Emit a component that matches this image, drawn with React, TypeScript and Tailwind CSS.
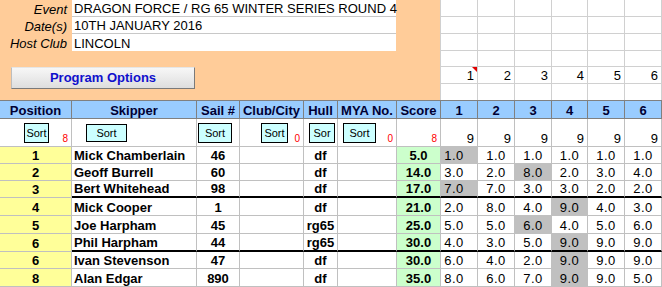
import React from "react";

const FONT = { fontFamily: '"Liberation Sans", Arial, sans-serif' };

const W = [
  "w-[72px]",
  "w-[125px]",
  "w-[43px]",
  "w-[64px]",
  "w-[34px]",
  "w-[59px]",
  "w-[44px]",
  "w-[37px]",
  "w-[37px]",
  "w-[37px]",
  "w-[36px]",
  "w-[37px]",
  "w-[37px]",
];
const RW = ["w-[37px]", "w-[37px]", "w-[37px]", "w-[36px]", "w-[37px]", "w-[37px]"];
const TOPH = ["h-[17px]", "h-[17px]", "h-[17px]", "h-[16px]", "h-[17px]", "h-[16px]"];

type Row = {
  pos: string;
  name: string;
  sail: string;
  hull: string;
  score: string;
  r: string[];
  g: number;
  h: string;
  thick: boolean;
};

const rows: Row[] = [
  { pos: "1", name: "Mick Chamberlain", sail: "46", hull: "df", score: "5.0", r: ["1.0", "1.0", "1.0", "1.0", "1.0", "1.0"], g: 0, h: "h-[17px]", thick: false },
  { pos: "2", name: "Geoff Burrell", sail: "60", hull: "df", score: "14.0", r: ["3.0", "2.0", "8.0", "2.0", "3.0", "4.0"], g: 2, h: "h-[17px]", thick: false },
  { pos: "3", name: "Bert Whitehead", sail: "98", hull: "df", score: "17.0", r: ["7.0", "7.0", "3.0", "3.0", "2.0", "2.0"], g: 0, h: "h-[17px]", thick: true },
  { pos: "4", name: "Mick Cooper", sail: "1", hull: "df", score: "21.0", r: ["2.0", "8.0", "4.0", "9.0", "4.0", "3.0"], g: 3, h: "h-[18px]", thick: false },
  { pos: "5", name: "Joe Harpham", sail: "45", hull: "rg65", score: "25.0", r: ["5.0", "5.0", "6.0", "4.0", "5.0", "6.0"], g: 2, h: "h-[18px]", thick: false },
  { pos: "6", name: "Phil Harpham", sail: "44", hull: "rg65", score: "30.0", r: ["4.0", "3.0", "5.0", "9.0", "9.0", "9.0"], g: 3, h: "h-[18px]", thick: true },
  { pos: "6", name: "Ivan Stevenson", sail: "47", hull: "df", score: "30.0", r: ["6.0", "4.0", "2.0", "9.0", "9.0", "9.0"], g: 3, h: "h-[17px]", thick: false },
  { pos: "8", name: "Alan Edgar", sail: "890", hull: "df", score: "35.0", r: ["8.0", "6.0", "7.0", "9.0", "9.0", "5.0"], g: 3, h: "h-[18px]", thick: false },
];

const headers = ["Position", "Skipper", "Sail #", "Club/City", "Hull", "MYA No.", "Score", "1", "2", "3", "4", "5", "6"];

function SortBtn({ label, cls }: { label: string; cls: string }) {
  return (
    <div
      className={`box-border border border-black bg-[#ccffff] flex items-center justify-center text-[11px] leading-none text-black overflow-hidden ${cls}`}
    >
      {label}
    </div>
  );
}

export default function App() {
  return (
    <div style={FONT} className="w-[662px] h-[287px] overflow-hidden bg-white text-black select-none">
      {/* Top area */}
      <div className="flex h-[100px]">
        <div className="box-border w-[441px] bg-[#ffcc99] border-r border-[#d0d0d0] flex flex-col">
          {[
            ["Event", "DRAGON FORCE / RG 65 WINTER SERIES ROUND 4"],
            ["Date(s)", "10TH JANUARY 2016"],
            ["Host Club", "LINCOLN"],
          ].map(([l, v], i) => (
            <div key={l} className="flex h-[17px]">
              <div className="w-[72px] flex items-end justify-end pr-[5px] italic text-[13px] leading-[15px]">
                {l}
              </div>
              <div
                className={`box-border w-[324px] bg-white flex items-end pl-[2px] text-[13px] leading-[15px] whitespace-nowrap ${
                  i < 2 ? "border-b border-[#c8c8c8]" : ""
                }`}
              >
                {v}
              </div>
            </div>
          ))}
          <div className="flex-1 pl-[11px] pt-[16px]">
            <div className="box-border w-[184px] h-[22px] flex items-center justify-center bg-gradient-to-b from-[#f7f7f7] to-[#dedede] border border-t-[#e6e6e6] border-l-[#bdbdbd] border-r-[#7a7a7a] border-b-[#7a7a7a] text-[13px] font-bold text-[#1010cc]">
              Program Options
            </div>
          </div>
        </div>
        <div className="flex flex-col">
          {TOPH.map((h, ri) => (
            <div key={ri} className={`flex ${h}`}>
              {RW.map((w, ci) => (
                <div
                  key={ci}
                  className={`box-border relative ${w} border-r border-[#d0d0d0] ${
                    ri < 5 ? "border-b" : ""
                  } flex items-end justify-end pr-[3px] text-[13px] leading-[15px]`}
                >
                  {ri === 4 ? String(ci + 1) : ""}
                  {ri === 4 && ci === 0 ? (
                    <span className="absolute top-0 right-0 w-0 h-0 border-t-[5px] border-l-[5px] border-t-[#e00000] border-l-transparent" />
                  ) : null}
                </div>
              ))}
            </div>
          ))}
        </div>
      </div>

      {/* Header row */}
      <div className="flex border-t border-[#808080] h-[19px]">
        {headers.map((t, i) => (
          <div
            key={i}
            className={`box-border ${W[i]} bg-[#99ccff] border-r border-b border-[#808080] flex items-end justify-center text-[13px] leading-[15px] font-bold text-[#000033] whitespace-nowrap`}
          >
            {t}
          </div>
        ))}
      </div>

      {/* Sort row */}
      <div className="flex h-[28px]">
        <div className={`box-border ${W[0]} relative border-r border-b border-[#c0c0c0] pt-[4px] pl-[24px]`}>
          <SortBtn label="Sort" cls="w-[25px] h-[20px]" />
          <span className="absolute right-[3px] bottom-[2px] text-[10px] leading-none text-[#ff0000]">8</span>
        </div>
        <div className={`box-border ${W[1]} border-r border-b border-[#c0c0c0] pt-[5px] pl-[14px]`}>
          <SortBtn label="Sort" cls="w-[41px] h-[18px]" />
        </div>
        <div className={`box-border ${W[2]} border-r border-b border-[#c0c0c0] pt-[4px] pl-[1px]`}>
          <SortBtn label="Sort" cls="w-[34px] h-[20px]" />
        </div>
        <div className={`box-border ${W[3]} relative border-r border-b border-[#c0c0c0] pt-[4px] pl-[21px]`}>
          <SortBtn label="Sort" cls="w-[27px] h-[20px]" />
          <span className="absolute right-[3px] bottom-[2px] text-[10px] leading-none text-[#ff0000]">0</span>
        </div>
        <div className={`box-border ${W[4]} border-r border-b border-[#c0c0c0] pt-[4px] pl-[5px]`}>
          <SortBtn label="Sor" cls="w-[26px] h-[20px]" />
        </div>
        <div className={`box-border ${W[5]} relative border-r border-b border-[#c0c0c0] pt-[4px] pl-[5px]`}>
          <SortBtn label="Sort" cls="w-[33px] h-[20px]" />
          <span className="absolute right-[3px] bottom-[2px] text-[10px] leading-none text-[#ff0000]">0</span>
        </div>
        <div className={`box-border ${W[6]} relative border-r border-b border-[#c0c0c0]`}>
          <span className="absolute right-[3px] bottom-[2px] text-[10px] leading-none text-[#ff0000]">8</span>
        </div>
        {RW.map((w, i) => (
          <div
            key={i}
            className={`box-border ${w} border-r border-b border-[#c0c0c0] flex items-end justify-end pr-[3px] text-[13px] leading-[15px]`}
          >
            9
          </div>
        ))}
      </div>

      {/* Data rows */}
      {rows.map((r, ri) => {
        const b = r.thick ? "border-b-2 border-b-black" : "border-b";
        const base = "box-border border-r border-[#c0c0c0] flex items-end text-[13px] leading-[15px] whitespace-nowrap";
        return (
          <div key={ri} className={`flex ${r.h}`}>
            <div className={`${base} border-b ${W[0]} bg-[#ffff99] justify-center font-bold`}>{r.pos}</div>
            <div className={`${base} ${b} ${W[1]} pl-[2px] font-bold`}>{r.name}</div>
            <div className={`${base} ${b} ${W[2]} justify-center font-bold`}>{r.sail}</div>
            <div className={`${base} ${b} ${W[3]}`} />
            <div className={`${base} ${b} ${W[4]} justify-center font-bold`}>{r.hull}</div>
            <div className={`${base} ${b} ${W[5]}`} />
            <div className={`${base} ${b} ${W[6]} bg-[#ccffcc] justify-center font-bold`}>{r.score}</div>
            {r.r.map((v, ci) => (
              <div
                key={ci}
                className={`${base} ${b} ${RW[ci]} justify-center tracking-[0.5px] ${ci === 0 ? "pr-[10px]" : ""} ${
                  r.g === ci ? "bg-[#c0c0c0]" : "bg-white"
                }`}
              >
                {v}
              </div>
            ))}
          </div>
        );
      })}
    </div>
  );
}
